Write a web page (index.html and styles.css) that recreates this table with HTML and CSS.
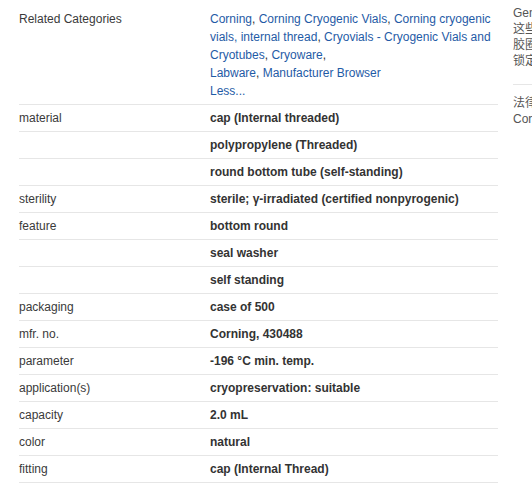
FILE: index.html
```html
<!DOCTYPE html>
<html>
<head>
<meta charset="utf-8">
<link rel="stylesheet" href="styles.css">
</head>
<body>
<div class="page">
  <div class="props">
    <div class="row">
      <div class="label">Related Categories</div>
      <div class="value links">
        <a href="#">Corning</a>, <a href="#">Corning Cryogenic Vials</a>, <a href="#">Corning cryogenic</a><br><a href="#">vials, internal thread</a>, <a href="#">Cryovials - Cryogenic Vials and</a><br><a href="#">Cryotubes</a>, <a href="#">Cryoware</a>,<br><a href="#">Labware</a>, <a href="#">Manufacturer Browser</a><br><a href="#">Less...</a>
      </div>
    </div>
    <div class="row"><div class="label">material</div><div class="value">cap (Internal threaded)</div></div>
    <div class="row"><div class="label"></div><div class="value">polypropylene (Threaded)</div></div>
    <div class="row"><div class="label"></div><div class="value">round bottom tube (self-standing)</div></div>
    <div class="row"><div class="label">sterility</div><div class="value">sterile; γ-irradiated (certified nonpyrogenic)</div></div>
    <div class="row"><div class="label">feature</div><div class="value">bottom round</div></div>
    <div class="row"><div class="label"></div><div class="value">seal washer</div></div>
    <div class="row"><div class="label"></div><div class="value">self standing</div></div>
    <div class="row"><div class="label">packaging</div><div class="value">case of 500</div></div>
    <div class="row"><div class="label">mfr. no.</div><div class="value">Corning, 430488</div></div>
    <div class="row"><div class="label">parameter</div><div class="value">-196 °C min. temp.</div></div>
    <div class="row"><div class="label">application(s)</div><div class="value">cryopreservation: suitable</div></div>
    <div class="row"><div class="label">capacity</div><div class="value">2.0 mL</div></div>
    <div class="row"><div class="label">color</div><div class="value">natural</div></div>
    <div class="row"><div class="label">fitting</div><div class="value">cap (Internal Thread)</div></div>
  </div>
  <aside class="side">
    <div class="side-block">
      <div class="side-line">General description</div>
      <div class="side-line">这些冻存管带有硅胶</div>
      <div class="side-line">胶圈，可防止泄漏</div>
      <div class="side-line">锁定螺旋盖设计</div>
    </div>
    <div class="side-block second">
      <div class="side-line">法律信息</div>
      <div class="side-line">Corning is a registered trademark</div>
    </div>
  </aside>
</div>
</body>
</html>
```
FILE: styles.css
```css
html, body {
  margin: 0;
  padding: 0;
  background: #ffffff;
}
body {
  font-family: "Liberation Sans", Arial, "Noto Sans CJK SC", sans-serif;
  font-size: 12px;
  color: #333333;
  overflow: hidden;
}
.page {
  display: flex;
  align-items: flex-start;
  padding: 6px 0 0 19px;
  width: 800px;
}
.props {
  width: 479px;
  flex: none;
}
.row {
  display: flex;
  border-bottom: 1px solid #e6e6e6;
  padding: 4px 0;
  line-height: 18px;
}
.label {
  width: 191px;
  flex: none;
  color: #3a3a3a;
}
.value {
  flex: 1;
  font-weight: bold;
  color: #333333;
}
.value.links {
  font-weight: normal;
}
.links a {
  color: #1f5ba6;
  text-decoration: none;
}
.side {
  margin-left: 15px;
  margin-top: -1px;
  width: 200px;
  flex: none;
  color: #555555;
  line-height: 16px;
}
.side-line {
  white-space: nowrap;
}
.side-block {
  padding-bottom: 15px;
}
.side-block.second {
  border-top: 1px solid #e6e6e6;
  padding-top: 10px;
}
```
